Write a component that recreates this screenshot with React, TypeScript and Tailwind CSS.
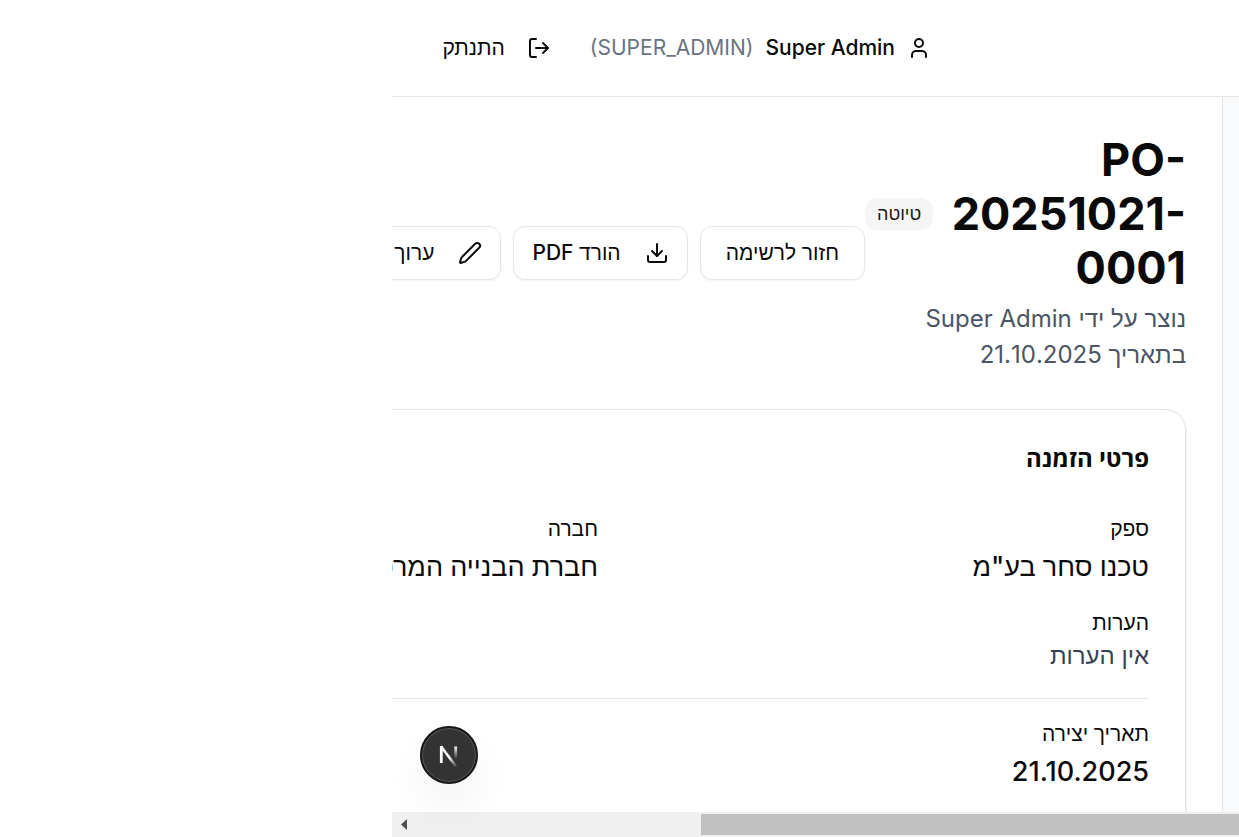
import React from "react";
import { Download, LogOut, Pen, User } from "lucide-react";

const outlineButton =
  "flex h-[54px] shrink-0 items-center gap-6 whitespace-nowrap rounded-xl border border-neutral-200 bg-white text-[21px] font-medium shadow-xs";

function Field({ label, value, muted }: { label: string; value: string; muted?: boolean }) {
  return (
    <div>
      <dt className="text-[21px] leading-[30px] font-medium">{label}</dt>
      <dd
        className={
          muted
            ? "text-2xl leading-9 text-gray-700"
            : "mt-0.5 whitespace-nowrap text-[27px] leading-[42px] font-medium"
        }
      >
        {value}
      </dd>
    </div>
  );
}

function Header() {
  return (
    <header className="flex h-[97px] shrink-0 items-center gap-6 whitespace-nowrap border-b border-neutral-200 bg-white pr-[308px] text-[21px] font-medium">
      <div className="flex items-center gap-3">
        <User size={24} />
        <span>Super Admin</span>
        <span dir="ltr" className="font-normal text-gray-500">
          (SUPER_ADMIN)
        </span>
      </div>
      <button type="button" className="flex items-center gap-[22px] px-[15px]">
        <LogOut size={24} />
        התנתק
      </button>
    </header>
  );
}

function PageTitle() {
  return (
    <div className="flex items-center justify-between">
      <div className="w-[321px] shrink-0">
        <div className="flex items-center gap-[18px]">
          <h1 className="flex-1 text-[45px] leading-[54px] font-bold">PO-20251021-0001</h1>
          <span className="flex h-8 shrink-0 items-center rounded-xl bg-neutral-100 px-3 text-lg font-medium text-neutral-900">
            טיוטה
          </span>
        </div>
        <p className="mt-1.5 text-2xl leading-9 text-gray-600">
          נוצר על ידי Super Admin בתאריך 21.10.2025
        </p>
      </div>
      <div className="flex flex-1 gap-3">
        <button type="button" className={`${outlineButton} px-[25px]`}>
          חזור לרשימה
        </button>
        <button type="button" className={`${outlineButton} px-[18px]`}>
          <Download size={24} />
          הורד PDF
        </button>
        <button type="button" className={`${outlineButton} px-[18px]`}>
          <Pen size={24} />
          ערוך
        </button>
      </div>
    </div>
  );
}

function OrderDetails() {
  return (
    <section className="mt-9 rounded-[21px] border border-neutral-200 bg-white p-9 shadow-sm">
      <h2 className="font-['Open_Sans',sans-serif] text-2xl leading-6 font-bold">פרטי הזמנה</h2>
      <dl className="mt-11 grid grid-cols-2 gap-x-9 gap-y-5">
        <Field label="ספק" value={'טכנו סחר בע"מ'} />
        <Field label="חברה" value="חברת הבנייה המרכזית" />
        <Field label="הערות" value="אין הערות" muted />
      </dl>
      <dl className="mt-6 border-t border-neutral-200 pt-5">
        <Field label="תאריך יצירה" value="21.10.2025" />
      </dl>
    </section>
  );
}

function DevBadge() {
  return (
    <button
      type="button"
      aria-label="N"
      className="absolute bottom-[53px] left-7 flex size-[58px] items-center justify-center rounded-full border-2 border-[#171717] bg-[#333333] shadow-[inset_0_0_0_1px_#5c5c5c,0_24px_48px_-12px_rgba(0,0,0,0.14)]"
    >
      <svg width="24" height="28" viewBox="0 0 24 28" fill="none" aria-hidden="true">
        <defs>
          <linearGradient id="stem" x1="18" y1="5" x2="18" y2="18" gradientUnits="userSpaceOnUse">
            <stop stopColor="#fff" />
            <stop offset="1" stopColor="#fff" stopOpacity="0" />
          </linearGradient>
          <linearGradient id="slash" x1="13" y1="16" x2="20" y2="26" gradientUnits="userSpaceOnUse">
            <stop stopColor="#fff" />
            <stop offset="1" stopColor="#fff" stopOpacity="0" />
          </linearGradient>
        </defs>
        <path d="M4.3 22V5" stroke="#fff" strokeWidth="2.8" />
        <path d="M4 5.5 19.5 26" stroke="url(#slash)" strokeWidth="2.6" />
        <path d="M18.7 5.5V18" stroke="url(#stem)" strokeWidth="2.8" />
      </svg>
    </button>
  );
}

function ScrollBar() {
  return (
    <div dir="ltr" className="flex h-[25px] shrink-0 items-center bg-[#f0f0f0]">
      <svg width="25" height="25" viewBox="0 0 25 25" className="shrink-0" aria-hidden="true">
        <path d="M9 12.5 15 7v11z" fill="#505050" />
      </svg>
      <div className="ml-[284px] h-[21px] flex-1 bg-[#c1c1c1]" />
    </div>
  );
}

export default function App() {
  return (
    <div
      dir="rtl"
      className="flex h-screen bg-white font-['Inter','Liberation_Sans',sans-serif] text-neutral-950"
    >
      <div className="relative flex min-w-0 flex-1 flex-col overflow-hidden">
        <Header />
        <div className="flex min-h-0 flex-1 overflow-hidden">
          <aside className="w-[17px] shrink-0 border-l border-neutral-200 bg-gray-50" />
          <main className="min-w-[1212px] shrink-0 p-9">
            <PageTitle />
            <OrderDetails />
          </main>
        </div>
        <ScrollBar />
        <DevBadge />
      </div>
      <div className="w-[392px] shrink-0" />
    </div>
  );
}
